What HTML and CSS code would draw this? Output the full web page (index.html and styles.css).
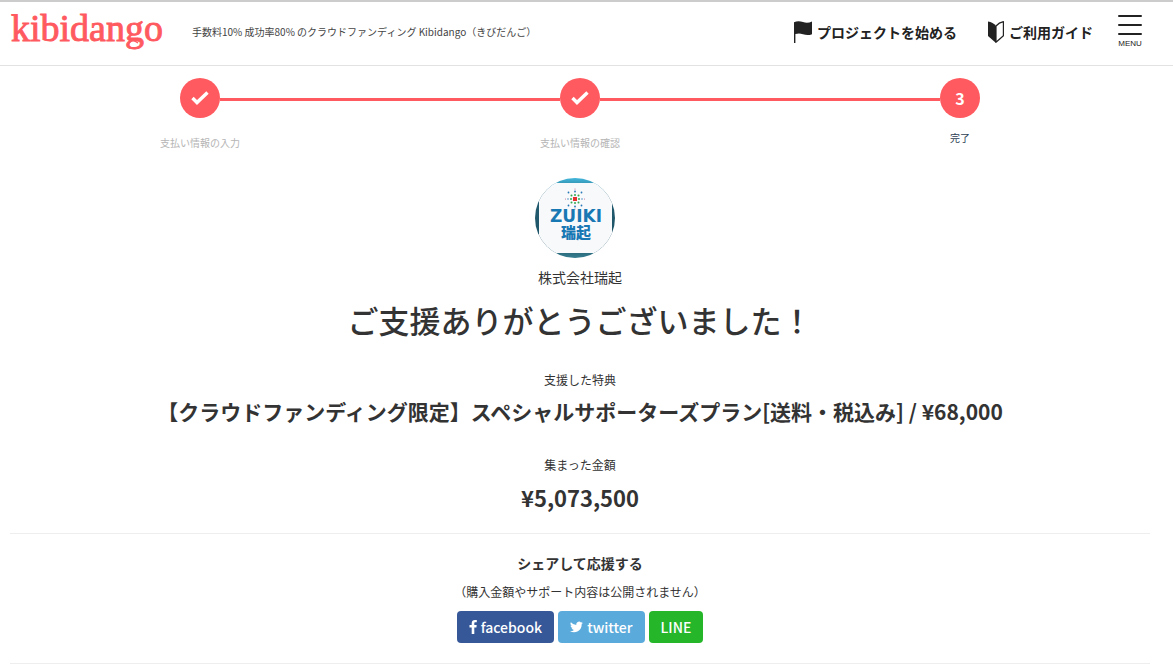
FILE: index.html
```html
<!DOCTYPE html>
<html lang="ja">
<head>
<meta charset="utf-8">
<meta name="viewport" content="width=device-width, initial-scale=1">
<title>ご支援ありがとうございました！ - Kibidango</title>
<link rel="stylesheet" href="styles.css">
</head>
<body>
<header class="header">
  <a class="logo" href="#" aria-label="kibidango">
    <svg width="160" height="50" viewBox="0 0 160 50">
      <text class="logo-text" x="1" y="34">kibidango</text>
      <path class="logo-knot" d="M118 31.500l5 1.500 5-1.500M119 36l4-3 5 3"/>
    </svg>
  </a>
  <p class="tagline">手数料10% 成功率80% のクラウドファンディング Kibidango（きびだんご）</p>
  <nav class="nav">
    <a class="nav-link" href="#">
      <svg width="20" height="22" viewBox="0 0 20 22"><path fill="#222" d="M1 1.200C4-.2 7 0 10 1s6 .9 9-.5v12.700C16 14.500 13 14.300 10 13.300s-5-.9-7.600-.2V22H1z"/></svg>
      <span>プロジェクトを始める</span>
    </a>
    <a class="nav-link" href="#">
      <svg width="18" height="22" viewBox="0 0 18 22"><path fill="#222" d="M1 .5q5 .8 8 4.500V22l-8-7z"/><path fill="none" stroke="#222" stroke-width="1.200" stroke-linejoin="round" d="M9 5q3-3.500 7.400-4.300v14L9 21.200z"/></svg>
      <span>ご利用ガイド</span>
    </a>
  </nav>
  <button class="menu" type="button">
    <svg width="24" height="20" viewBox="0 0 24 20"><path stroke="#222" stroke-width="2" stroke-linecap="round" d="M1 1h22M1 10h22M1 19h22"/></svg>
    <span>MENU</span>
  </button>
</header>

<main class="main">
  <ol class="steps">
    <li class="step">
      <span class="circle"><svg width="18" height="14" viewBox="0 0 18 14"><path fill="none" stroke="#fff" stroke-width="3.400" d="M1.500 7l4.500 4.500L16.500 1.500"/></svg></span>
      <span class="step-label">支払い情報の入力</span>
    </li>
    <li class="bar"></li>
    <li class="step">
      <span class="circle"><svg width="18" height="14" viewBox="0 0 18 14"><path fill="none" stroke="#fff" stroke-width="3.400" d="M1.500 7l4.500 4.500L16.500 1.500"/></svg></span>
      <span class="step-label">支払い情報の確認</span>
    </li>
    <li class="bar"></li>
    <li class="step current">
      <span class="circle">3</span>
      <span class="step-label">完了</span>
    </li>
  </ol>

  <section class="thanks">
    <svg class="avatar" width="80" height="80" viewBox="0 0 80 80" role="img" aria-label="ZUIKI 瑞起">
      <defs>
        <clipPath id="round"><circle cx="40" cy="40" r="40"/></clipPath>
        <linearGradient id="sea" x1="0" y1="0" x2="0" y2="1"><stop offset="0" stop-color="#42b7dc"/><stop offset=".2" stop-color="#225b70"/><stop offset=".85" stop-color="#1e5365"/><stop offset="1" stop-color="#367f91"/></linearGradient>
      </defs>
      <g clip-path="url(#round)">
        <rect width="80" height="80" fill="url(#sea)"/>
        <rect x="4" y="5" width="73" height="70" rx="1" fill="#f8f9fb"/>
        <rect x="38" y="19" width="4" height="4" fill="#e5302f"/>
        <g fill="#35a853"><circle cx="40" cy="17" r="1"/><circle cx="40" cy="25" r="1"/><circle cx="36" cy="21" r="1"/><circle cx="44" cy="21" r="1"/><circle cx="36.500" cy="17.500" r="1"/><circle cx="43.500" cy="17.500" r="1"/><circle cx="36.500" cy="24.500" r="1"/><circle cx="43.500" cy="24.500" r="1"/></g>
        <g fill="#2779b5"><circle cx="40" cy="13.500" r=".9"/><circle cx="40" cy="28.500" r=".9"/><circle cx="33.500" cy="14.500" r=".9"/><circle cx="46.500" cy="14.500" r=".9"/><circle cx="33.500" cy="27.500" r=".9"/><circle cx="46.500" cy="27.500" r=".9"/><circle cx="33" cy="21" r=".7"/><circle cx="47" cy="21" r=".7"/></g>
        <g fill="#c86a92"><circle cx="30.500" cy="21" r=".6"/><circle cx="49.500" cy="21" r=".6"/><circle cx="40" cy="11" r=".6"/><circle cx="40" cy="31" r=".6"/></g>
        <text class="avatar-name" x="41" y="44">ZUIKI</text>
        <text class="avatar-kanji" x="41" y="60">瑞起</text>
      </g>
    </svg>
    <p class="owner">株式会社瑞起</p>
    <h1 class="title">ご支援ありがとうございました！</h1>
    <p class="caption">支援した特典</p>
    <h2 class="plan">【クラウドファンディング限定】スペシャルサポーターズプラン[送料・税込み] / ¥68,000</h2>
    <p class="caption">集まった金額</p>
    <p class="amount">¥5,073,500</p>
  </section>

  <section class="share">
    <h3 class="share-title">シェアして応援する</h3>
    <p class="share-note">（購入金額やサポート内容は公開されません）</p>
    <div class="share-buttons">
      <a class="btn facebook" href="#"><svg width="8" height="14" viewBox="0 0 8 14"><path fill="#fff" d="M7.800.1v2.200H6.500c-1 0-1.200.5-1.200 1.200v1.500h2.400l-.3 2.500H5.300V14H2.700V7.500H.5V5h2.200V3.200C2.700 1.100 4 0 5.900 0z"/></svg>facebook</a>
      <a class="btn twitter" href="#"><svg width="13" height="12" viewBox="0 0 24 20"><path fill="#fff" d="M24 2.400a10 10 0 0 1-2.800.8A5 5 0 0 0 23.300.5a10 10 0 0 1-3.100 1.200A4.900 4.900 0 0 0 11.800 6.200 14 14 0 0 1 1.700 1a4.900 4.900 0 0 0 1.500 6.600A5 5 0 0 1 1 7v.1a4.900 4.900 0 0 0 3.900 4.800 5 5 0 0 1-2.200.1 4.900 4.900 0 0 0 4.600 3.400A10 10 0 0 1 0 17.500 14 14 0 0 0 21.500 5z"/></svg>twitter</a>
      <a class="btn line" href="#">LINE</a>
    </div>
  </section>
</main>
</body>
</html>
```
FILE: styles.css
```css
* { box-sizing: border-box; }

body {
  margin: 0;
  background: #fff;
  color: #333;
  font-family: "Noto Sans CJK JP", sans-serif;
  font-size: 12px;
  line-height: 20px;
}

h1, h2, h3, p, ol { margin: 0; padding: 0; font-weight: normal; }
a { color: inherit; text-decoration: none; }
svg { display: block; flex: none; }

.header {
  display: flex;
  align-items: center;
  height: 66px;
  padding: 0 31px 3px 10px;
  border-top: 2px solid #ccc;
  border-bottom: 1px solid #e2e2e2;
}

.logo-text {
  fill: #ff5a5f;
  stroke: #ff5a5f;
  stroke-width: 0.9;
  font: 38px "Liberation Serif", serif;
}
.logo-knot { fill: none; stroke: #ff5a5f; stroke-width: 1.4; }

.tagline { margin-left: 22px; font-size: 10px; color: #444; white-space: nowrap; }

.nav { display: flex; gap: 30px; margin-left: auto; }
.nav-link {
  display: flex;
  align-items: center;
  gap: 4px;
  color: #222;
  font-size: 14px;
  font-weight: 700;
  white-space: nowrap;
}

.menu {
  display: flex;
  flex-direction: column;
  align-items: center;
  gap: 4px;
  margin-left: 25px;
  padding: 0;
  border: 0;
  background: none;
  color: #222;
  font: 8px/10px "Liberation Sans", sans-serif;
}

.main { padding: 12px 23px 0 10px; }

.steps {
  display: flex;
  align-items: flex-start;
  max-width: 840px;
  margin: 0 auto;
  list-style: none;
}
.step { display: flex; flex-direction: column; align-items: center; width: 80px; }
.circle {
  display: flex;
  align-items: center;
  justify-content: center;
  width: 40px;
  height: 40px;
  border-radius: 50%;
  background: #ff5a5f;
  color: #fff;
  font-size: 16px;
  font-weight: 700;
}
.bar { flex: 1; height: 3px; margin: 20px -20px 0; background: #ff5a5f; }
.step-label { margin-top: 15px; font-size: 10px; color: #b5b5b5; white-space: nowrap; }
.current .step-label { margin-top: 10px; color: #2e3f55; }

.thanks {
  display: flex;
  flex-direction: column;
  align-items: center;
  padding: 25px 0 21px;
  border-bottom: 1px solid #eee;
  text-align: center;
}
.avatar { margin-right: 10px; }
.avatar-name {
  fill: #1878b4;
  font: 700 17px "DejaVu Sans", sans-serif;
  text-anchor: middle;
}
.avatar-kanji {
  fill: #1878b4;
  font: 900 15px "Noto Sans CJK JP", sans-serif;
  text-anchor: middle;
}
.owner { margin-top: 9px; font-size: 14px; }
.title { margin: 13px 0 30px; font-size: 31px; font-weight: 500; line-height: 40px; }
.plan { margin: 6px 0 29px; font-size: 21px; font-weight: 700; line-height: 30px; }
.amount { margin-top: 7px; font-size: 22px; font-weight: 700; line-height: 30px; }

.share { padding: 19px 0 20px; border-bottom: 1px solid #eee; text-align: center; }
.share-title { font-size: 14px; font-weight: 700; }
.share-note { margin: 9px 0; }
.share-buttons { display: flex; justify-content: center; gap: 4px; }
.btn {
  display: flex;
  align-items: center;
  gap: 4px;
  height: 32px;
  padding: 0 12px;
  border-radius: 4px;
  color: #fff;
  font-size: 14px;
  font-weight: 500;
}
.facebook { background: #365899; }
.twitter { background: #5aaadb; }
.line { background: #25b62a; }
```
